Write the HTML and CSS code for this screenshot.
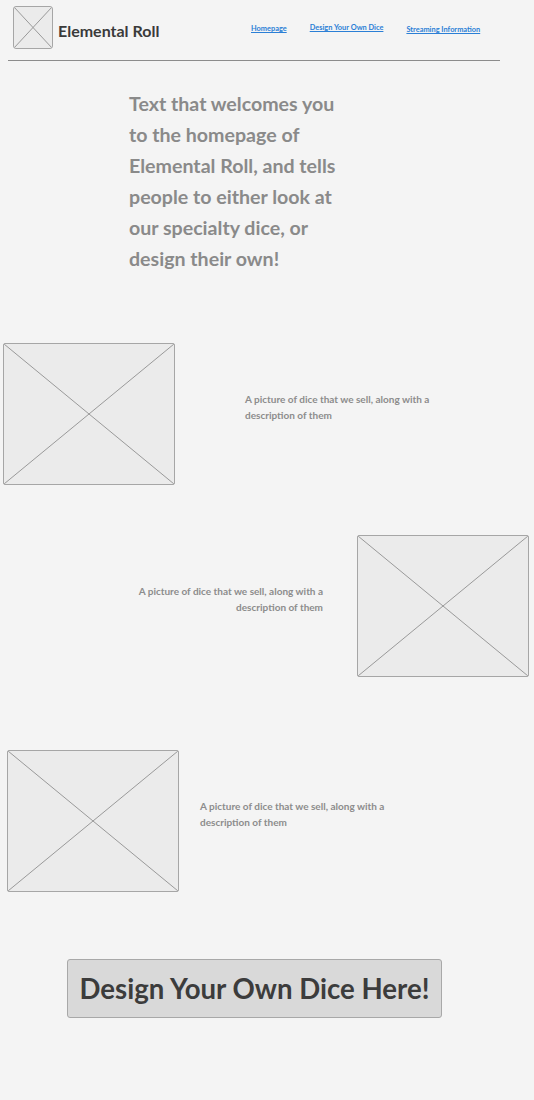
FILE: index.html
```html
<!DOCTYPE html>
<html lang="en">
<head>
<meta charset="utf-8">
<title>Elemental Roll</title>
<link rel="stylesheet" href="styles.css">
</head>
<body>
<header class="site-header">
  <div class="brand">
    <div class="placeholder logo">
      <svg viewBox="0 0 40 43" preserveAspectRatio="none"><line x1="0" y1="0" x2="40" y2="43"/><line x1="40" y1="0" x2="0" y2="43"/></svg>
    </div>
    <span class="brand-name">Elemental Roll</span>
  </div>
  <nav class="nav">
    <a href="#" class="nav-link">Homepage</a>
    <a href="#" class="nav-link nav-up">Design Your Own Dice</a>
    <a href="#" class="nav-link nav-down">Streaming Information</a>
  </nav>
</header>

<main>
  <p class="hero">Text that welcomes you to the homepage of Elemental Roll, and tells people to either look at our specialty dice, or design their own!</p>

  <section class="feature feature-1">
    <div class="placeholder photo">
      <svg viewBox="0 0 172 142" preserveAspectRatio="none"><line x1="0" y1="0" x2="172" y2="142"/><line x1="172" y1="0" x2="0" y2="142"/></svg>
    </div>
    <p class="caption">A picture of dice that we sell, along with a description of them</p>
  </section>

  <section class="feature feature-2">
    <p class="caption caption-right">A picture of dice that we sell, along with a description of them</p>
    <div class="placeholder photo">
      <svg viewBox="0 0 172 142" preserveAspectRatio="none"><line x1="0" y1="0" x2="172" y2="142"/><line x1="172" y1="0" x2="0" y2="142"/></svg>
    </div>
  </section>

  <section class="feature feature-3">
    <div class="placeholder photo">
      <svg viewBox="0 0 172 142" preserveAspectRatio="none"><line x1="0" y1="0" x2="172" y2="142"/><line x1="172" y1="0" x2="0" y2="142"/></svg>
    </div>
    <p class="caption">A picture of dice that we sell, along with a description of them</p>
  </section>

  <div class="cta-wrap">
    <button class="cta">Design Your Own Dice Here!</button>
  </div>
</main>
</body>
</html>
```

FILE: styles.css
```css
* { box-sizing: border-box; }

body {
  margin: 0;
  background: #f4f4f4;
  font-family: "Lato", "Open Sans", sans-serif;
  color: #888;
  width: 534px;
  min-height: 1100px;
}

.site-header {
  display: flex;
  align-items: flex-start;
  width: 492px;
  height: 61px;
  margin-left: 8px;
  padding: 6px 0 0 5px;
  border-bottom: 1px solid #8c8c8c;
}

.brand {
  display: flex;
  align-items: center;
  gap: 5px;
  width: 238px;
  flex: none;
}

.placeholder {
  background: #ebebeb;
  border: 1.5px solid #a6a6a6;
  border-radius: 2px;
  overflow: hidden;
}

.placeholder svg {
  display: block;
  width: 100%;
  height: 100%;
}

.placeholder line {
  stroke: #999;
  stroke-width: 1;
  vector-effect: non-scaling-stroke;
}

.logo {
  width: 40px;
  height: 43px;
  border-radius: 3px;
}

.brand-name {
  font-size: 16px;
  font-weight: 700;
  color: #3a3a3a;
  padding-top: 6px;
}

.nav {
  display: flex;
  gap: 23px;
  padding-top: 18px;
}

.nav-link {
  font-size: 7.4px;
  font-weight: 700;
  color: #2b7fd6;
  text-decoration: underline;
}

.nav-up { margin-top: -1px; }
.nav-down { margin-top: 1px; }

.hero {
  margin: 27px 0 0 129px;
  width: 226px;
  font-size: 19.6px;
  font-weight: 700;
  line-height: 31px;
  color: #8a8a8a;
}

.feature {
  display: flex;
  align-items: flex-start;
}

.photo {
  width: 172px;
  height: 142px;
  flex: none;
}

.caption {
  margin: 48px 0 0;
  width: 195px;
  font-size: 10px;
  font-weight: 700;
  line-height: 16px;
  color: #8c8c8c;
}

.caption-right {
  text-align: right;
}

.feature-1 {
  margin-top: 69px;
  padding-left: 3px;
  gap: 70px;
}

.feature-2 {
  margin-top: 50px;
  justify-content: flex-end;
  padding-right: 5px;
  gap: 34px;
}

.feature-3 {
  margin-top: 73px;
  padding-left: 7px;
  gap: 21px;
}

.cta-wrap {
  margin-top: 67px;
  padding-left: 67px;
}

.cta {
  width: 375px;
  height: 59px;
  background: #d9d9d9;
  border: 1.5px solid #a8a8a8;
  border-radius: 3px;
  font-family: "Lato", "Open Sans", sans-serif;
  font-size: 27.6px;
  font-weight: 700;
  color: #3c3c3c;
  padding: 0;
}
```
